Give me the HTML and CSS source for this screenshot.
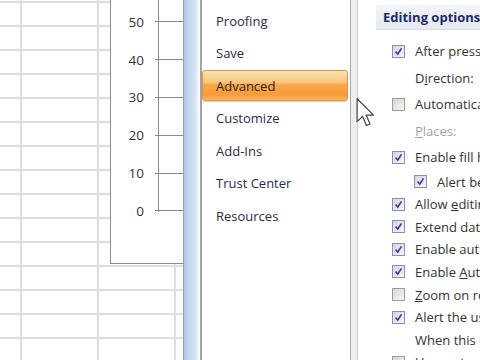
FILE: index.html
```html
<!DOCTYPE html>
<html lang="en">
<head>
    <meta charset="UTF-8">
    <meta name="viewport" content="width=device-width, initial-scale=1.0">
    <title>Excel Options - Advanced</title>
    <link rel="stylesheet" href="styles.css">
</head>
<body>
    <div class="screen">
        <!-- worksheet behind the dialog -->
        <div class="sheet">
            <div class="chart">
                <div class="tick"><span class="val">50</span><span class="mark"></span></div>
                <div class="tick"><span class="val">40</span><span class="mark"></span></div>
                <div class="tick"><span class="val">30</span><span class="mark"></span></div>
                <div class="tick"><span class="val">20</span><span class="mark"></span></div>
                <div class="tick"><span class="val">10</span><span class="mark"></span></div>
                <div class="tick"><span class="val">0</span><span class="mark"></span></div>
            </div>
        </div>

        <div class="frame"></div>

        <nav class="nav">
            <div class="nav-item">Proofing</div>
            <div class="nav-item">Save</div>
            <div class="nav-item active">Advanced</div>
            <div class="nav-item">Customize</div>
            <div class="nav-item">Add-Ins</div>
            <div class="nav-item">Trust Center</div>
            <div class="nav-item">Resources</div>
        </nav>

        <div class="divider"></div>

        <div class="content">
            <div class="section-head">Editing options</div>
            <div class="opts">
                <div class="opt tall"><span class="box on"><svg viewBox="0 0 13 13"><path d="M3 6.5 L5.6 9.6 L10 2.8"/></svg></span><span class="label">After pressing Enter, move selection</span></div>
                <div class="opt tall sub"><span class="label">D<u>i</u>rection:</span></div>
                <div class="opt tall"><span class="box"></span><span class="label">Automatically insert a decimal point</span></div>
                <div class="opt tall sub"><span class="label muted"><u>P</u>laces:</span></div>
                <div class="opt tall"><span class="box on"><svg viewBox="0 0 13 13"><path d="M3 6.5 L5.6 9.6 L10 2.8"/></svg></span><span class="label">Enable fill handle and cell drag-and-drop</span></div>
                <div class="opt indent"><span class="box on"><svg viewBox="0 0 13 13"><path d="M3 6.5 L5.6 9.6 L10 2.8"/></svg></span><span class="label">Alert before overwriting cells</span></div>
                <div class="opt"><span class="box on"><svg viewBox="0 0 13 13"><path d="M3 6.5 L5.6 9.6 L10 2.8"/></svg></span><span class="label">Allow <u>e</u>diting directly in cells</span></div>
                <div class="opt"><span class="box on"><svg viewBox="0 0 13 13"><path d="M3 6.5 L5.6 9.6 L10 2.8"/></svg></span><span class="label">Extend data range formats and formulas</span></div>
                <div class="opt"><span class="box on"><svg viewBox="0 0 13 13"><path d="M3 6.5 L5.6 9.6 L10 2.8"/></svg></span><span class="label">Enable automatic percent entry</span></div>
                <div class="opt"><span class="box on"><svg viewBox="0 0 13 13"><path d="M3 6.5 L5.6 9.6 L10 2.8"/></svg></span><span class="label">Enable <u>A</u>utoComplete for cell values</span></div>
                <div class="opt"><span class="box"></span><span class="label"><u>Z</u>oom on roll with IntelliMouse</span></div>
                <div class="opt"><span class="box on"><svg viewBox="0 0 13 13"><path d="M3 6.5 L5.6 9.6 L10 2.8"/></svg></span><span class="label">Alert the user when a potentially time consuming operation occurs</span></div>
                <div class="opt sub"><span class="label">When this number of cells (in thousands) is affected:</span></div>
                <div class="opt"><span class="box"></span><span class="label">Use system separators</span></div>
            </div>
        </div>

        <svg class="cursor" viewBox="0 0 12 19" width="19" height="29">
            <path d="M0.5 0.5 L0.5 15.5 L4 12 L6.6 18 L9 17 L6.4 11.2 L11.2 11.2 Z"/>
        </svg>
    </div>
</body>
</html>
```

FILE: styles.css
```css
* {
    box-sizing: border-box;
}

body {
    margin: 0;
    font-family: "Open Sans", "DejaVu Sans", sans-serif;
    font-size: 13px;
    color: #333;
    background: #fff;
}

.screen {
    position: relative;
    width: 480px;
    height: 360px;
    display: flex;
    overflow: hidden;
}

/* worksheet */
.sheet {
    position: relative;
    width: 183px;
    height: 100%;
    overflow: hidden;
    background-color: #fff;
    background-image:
        linear-gradient(to right, #dedede 2px, transparent 2px),
        linear-gradient(to bottom, #dedede 2px, transparent 2px);
    background-size: 77px 24px;
    background-position: 20px 25px;
}

.chart {
    position: absolute;
    left: 110px;
    top: 0;
    width: 100px;
    height: 264px;
    padding-top: 3px;
    background: #fff;
    border-left: 1px solid #8c8c8c;
    border-bottom: 1px solid #8c8c8c;
    display: flex;
    flex-direction: column;
}

.chart::after {
    content: "";
    position: absolute;
    left: 47px;
    top: 0;
    width: 1px;
    height: 212px;
    background: #8a8a8a;
}

.tick {
    height: 37.8px;
    display: flex;
    align-items: center;
}

.val {
    width: 33px;
    text-align: right;
    font-size: 13.5px;
    color: #333;
}

.mark {
    flex: 1;
    height: 1px;
    margin-left: 11px;
    background: #8a8a8a;
}

/* dialog frame */
.frame {
    width: 17px;
    height: 100%;
    border-left: 1px solid #8fa3bd;
    background: linear-gradient(to right, #aec6e4 0%, #c4d8ef 35%, #d6e4f5 70%, #eef4fb 86%, #fbfdff 100%);
}

.nav {
    width: 151px;
    height: 100%;
    padding-top: 4.5px;
    background: #fff;
    border-left: 2px solid #a5a5a5;
    border-right: 1px solid #a8a8a8;
}

.nav-item {
    height: 32.5px;
    display: flex;
    align-items: center;
    padding-left: 14px;
    color: #2b2c4a;
    white-space: nowrap;
}

.nav-item.active {
    margin: 0.75px 2px 0.75px 0;
    padding-left: 13px;
    height: 31px;
    color: #2a2220;
    border: 1px solid #dc963f;
    border-radius: 3px;
    background: linear-gradient(to bottom, #fde2b4 0%, #fcc77f 38%, #f9a747 48%, #f89b37 82%, #fab463 100%);
    box-shadow: 0 1px 1px rgba(0, 0, 0, 0.2);
}

.divider {
    width: 7px;
    height: 100%;
    background: #eeeeee;
    border-right: 1px solid #cfcfcf;
}

/* options pane */
.content {
    flex: 1;
    min-width: 0;
    padding-left: 18px;
    padding-top: 5px;
    overflow: hidden;
}

.section-head {
    height: 25px;
    display: flex;
    align-items: center;
    padding-left: 7px;
    white-space: nowrap;
    font-weight: bold;
    color: #1c2c6c;
    background: linear-gradient(to bottom, #f4f5f8, #e6e9ef);
    border-bottom: 1px solid #d6dae2;
}

.opts {
    margin-top: 7.75px;
    padding-left: 16px;
}

.opt {
    height: 22.6px;
    display: flex;
    align-items: center;
    gap: 10px;
    white-space: nowrap;
}

.opt.tall {
    height: 26.5px;
}

.opt.sub {
    padding-left: 23px;
}

.opt.indent {
    padding-left: 22px;
}

.box {
    flex: none;
    width: 13px;
    height: 13px;
    border: 1px solid #9c9c9c;
    background: linear-gradient(135deg, #d6d6d6, #f7f7f7);
}

.box.on {
    border-color: #8e90a8;
    background: linear-gradient(135deg, #d3d5e8, #f5f5fb);
}

.box svg {
    display: block;
    width: 11px;
    height: 11px;
}

.box svg path {
    fill: none;
    stroke: #3d3f98;
    stroke-width: 2;
}

.label {
    color: #333;
}

.label.muted {
    color: #a3a3a3;
}

.cursor {
    position: absolute;
    left: 356px;
    top: 98px;
}

.cursor path {
    fill: #fff;
    stroke: #444;
    stroke-width: 0.8;
    stroke-linejoin: round;
}
```
